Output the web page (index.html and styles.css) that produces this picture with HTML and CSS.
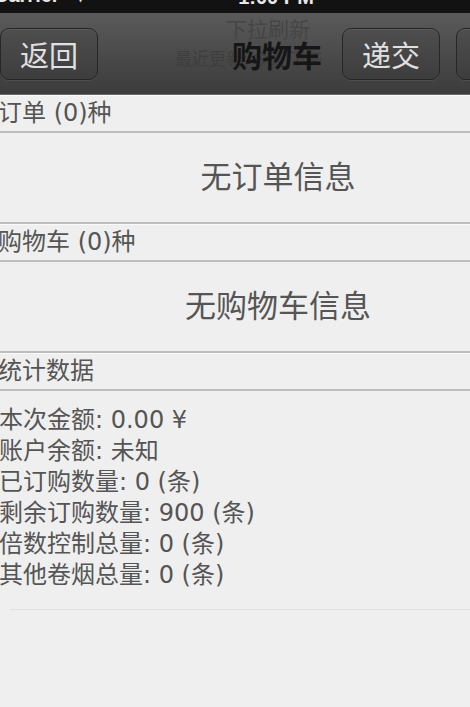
FILE: index.html
```html
<!DOCTYPE html>
<html lang="zh-CN">
<head>
<meta charset="utf-8">
<title>购物车</title>
<link rel="stylesheet" href="styles.css">
</head>
<body>
<div class="screen">
  <div class="status">
    <span class="carrier">Carrier <span class="wifi">▾</span></span>
    <span class="time">1:00 PM</span>
    <span class="battery"></span>
  </div>
  <div class="nav">
    <div class="nav-left"><span class="btn">返回</span></div>
    <div class="nav-title">
      <span class="pull pull-top">下拉刷新</span>
      <span class="pull pull-sub">最近更新: 今天 下午</span>
      <span class="title">购物车</span>
    </div>
    <div class="nav-right"><span class="btn">递交</span><span class="btn">清空</span></div>
  </div>
  <div class="section-head">订单 (0)种</div>
  <div class="empty">无订单信息</div>
  <div class="section-head">购物车 (0)种</div>
  <div class="empty">无购物车信息</div>
  <div class="section-head">统计数据</div>
  <div class="stats">
    <div class="stat">本次金额: 0.00 ¥</div>
    <div class="stat">账户余额: 未知</div>
    <div class="stat">已订购数量: 0 (条)</div>
    <div class="stat">剩余订购数量: 900 (条)</div>
    <div class="stat">倍数控制总量: 0 (条)</div>
    <div class="stat">其他卷烟总量: 0 (条)</div>
  </div>
  <div class="foot-line"></div>
</div>
</body>
</html>
```
FILE: styles.css
```css
html, body {
  margin: 0;
  padding: 0;
  background: #efefef;
  overflow: hidden;
  width: 470px;
  height: 707px;
}
.screen {
  width: 576px;
  margin-left: -10px;
  font-family: "DejaVu Sans", "Noto Sans CJK SC", sans-serif;
  color: #555;
}
.status {
  height: 13px;
  background: #121212;
  display: flex;
  align-items: flex-end;
  overflow: hidden;
  padding: 0 8px 0 4px;
  color: #e8e8e8;
  font-family: "Liberation Sans", sans-serif;
  font-weight: bold;
  font-size: 20px;
}
.status > span {
  line-height: 20px;
  margin-bottom: 6px;
  white-space: nowrap;
}
.carrier, .battery { flex: 1 1 0; }
.wifi { margin-left: 12px; font-size: 14px; }
.nav {
  height: 82px;
  background: linear-gradient(#5a5a5a, #494949 55%, #3c3c3c);
  border-bottom: 1px solid #6a6a6a;
  display: grid;
  grid-template-columns: 1fr auto 1fr;
  align-items: center;
  padding: 0 12px 0 10px;
  box-sizing: border-box;
}
.nav-left { display: flex; justify-content: flex-start; }
.nav-right { display: flex; justify-content: flex-end; gap: 16px; }
.btn {
  width: 98px;
  height: 52px;
  box-sizing: border-box;
  border: 1px solid #262626;
  border-radius: 9px;
  background: linear-gradient(#4e4e4e, #3d3d3d);
  box-shadow: inset 0 1px 0 rgba(255,255,255,0.08), 0 1px 0 rgba(255,255,255,0.08);
  color: #e0e0e0;
  font-family: "Noto Sans CJK SC", sans-serif;
  font-size: 29px;
  line-height: 50px;
  text-align: center;
}
.nav-title {
  position: relative;
  text-align: center;
  height: 40px;
}
.title {
  position: relative;
  font-family: "Noto Sans CJK SC", sans-serif;
  font-size: 30px;
  font-weight: bold;
  color: #161616;
  line-height: 40px;
}
.pull {
  position: absolute;
  white-space: nowrap;
  font-family: "Noto Sans CJK SC", sans-serif;
}
.pull-top {
  font-size: 21px;
  line-height: 24px;
  top: -18px;
  left: -6px;
  color: #454545;
}
.pull-sub {
  font-size: 17px;
  line-height: 20px;
  top: 14px;
  left: -57px;
  color: #3e3e3e;
}
.section-head {
  height: 35px;
  line-height: 35px;
  padding-left: 8px;
  font-size: 24px;
  color: #555;
  border-bottom: 2px solid #bdbdbd;
  border-top: 1px solid #fafafa;
}
.empty {
  height: 89px;
  line-height: 89px;
  text-align: center;
  font-size: 31px;
  color: #555;
  border-bottom: 2px solid #bdbdbd;
}
.stats {
  padding: 14px 0 0 9px;
}
.stat {
  font-size: 24px;
  line-height: 31px;
  color: #555;
}
.foot-line {
  margin: 18px 0 0 20px;
  height: 1px;
  background: #e0e0e0;
}
```
